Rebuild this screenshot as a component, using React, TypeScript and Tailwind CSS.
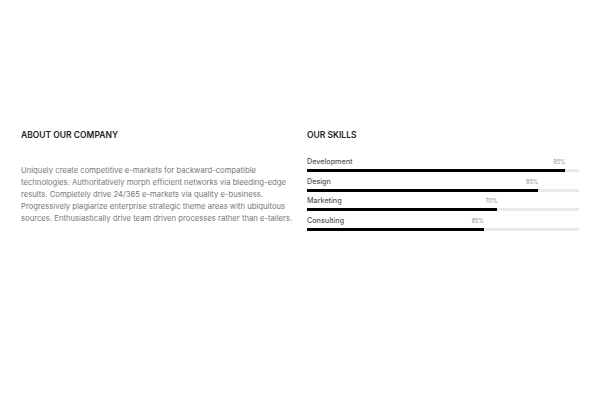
const SKILLS = [
  { name: "Development", value: 95 },
  { name: "Design", value: 85 },
  { name: "Marketing", value: 70 },
  { name: "Consulting", value: 65 },
];

export default function App() {
  return (
    <div
      className="w-[600px] h-[400px] bg-white flex items-start pt-[129px] px-[21px] gap-[14px]"
      style={{ fontFamily: "Inter, 'Open Sans', sans-serif" }}
    >
      {/* About */}
      <div className="w-[272px]">
        <h3 className="text-[8.5px] leading-[12px] font-semibold text-[#222]">
          ABOUT OUR COMPANY
        </h3>
        <p className="mt-[24px] text-[7.7px] leading-[12px] text-[#777]">
          Uniquely create competitive e-markets for backward-compatible
          technologies. Authoritatively morph efficient networks via
          bleeding-edge results. Completely drive 24/365 e-markets via quality
          e-business. Progressively plagiarize enterprise strategic theme areas
          with ubiquitous sources. Enthusiastically drive team driven processes
          rather than e-tailers.
        </p>
      </div>

      {/* Skills */}
      <div className="w-[272px]">
        <h3 className="text-[8.5px] leading-[12px] font-semibold text-[#222]">
          OUR SKILLS
        </h3>
        <div className="mt-[16px] flex flex-col gap-[4.7px]">
          {SKILLS.map((s) => (
            <div key={s.name}>
              <div className="relative h-[10px] text-[7.2px] leading-[10px]">
                <span className="font-medium text-[#555]">{s.name}</span>
                <span
                  className="absolute top-[0px] text-[5.5px] leading-[10px] text-[#888] -translate-x-full"
                  style={{ left: `${s.value}%` }}
                >
                  {s.value}%
                </span>
              </div>
              <div className="mt-[2px] h-[3px] bg-[#ebebeb]">
                <div className="h-full bg-black" style={{ width: `${s.value}%` }} />
              </div>
            </div>
          ))}
        </div>
      </div>
    </div>
  );
}
